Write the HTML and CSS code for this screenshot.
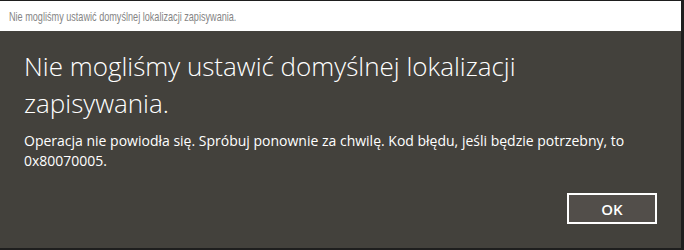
FILE: index.html
```html
<!DOCTYPE html>
<html lang="pl">

<head>
    <meta charset="UTF-8">
    <meta name="viewport" content="width=device-width, initial-scale=1.0">
    <title>Nie mogliśmy ustawić domyślnej lokalizacji zapisywania.</title>
    <link rel="stylesheet" href="styles.css">
</head>

<body>
    <div class="window">
        <div class="titlebar"><span>Nie mogliśmy ustawić domyślnej lokalizacji zapisywania.</span></div>

        <div class="dialog">
            <h1>Nie mogliśmy ustawić domyślnej lokalizacji zapisywania.</h1>
            <p>Operacja nie powiodła się. Spróbuj ponownie za chwilę. Kod błędu, jeśli będzie potrzebny, to 0x80070005.</p>

            <div class="actions">
                <button type="button">OK</button>
            </div>
        </div>
    </div>
</body>

</html>
```

FILE: styles.css
```css
body {
    font-family: "Open Sans", "Noto Sans", sans-serif;
    margin: 0;
    padding: 0;
    background-color: #1e1e1e;
    width: 684px;
    height: 250px;
    overflow: hidden;
}

.window {
    margin: 1px 3px 0 0;
    height: 247px;
    display: flex;
    flex-direction: column;
    background-color: #43413c;
}

.titlebar {
    height: 30px;
    line-height: 31px;
    background: white;
    color: #858585;
    font-family: "Liberation Sans", sans-serif;
    font-size: 13.5px;
    padding-left: 9px;
    white-space: nowrap;
}

/* the caption font is a narrow one */
.titlebar span {
    display: inline-block;
    transform: scaleX(0.675);
    transform-origin: left center;
}

.dialog {
    flex: 1;
    display: flex;
    flex-direction: column;
    padding: 17px 24px 24px 24px;
    color: white;
}

.dialog h1,
.dialog p {
    max-width: 612px;
}

.dialog h1 {
    margin: 0;
    font-size: 26px;
    font-weight: 300;
    line-height: 37px;
}

.dialog p {
    margin: 9px 0 0 0;
    font-size: 14px;
    line-height: 20px;
}

.actions {
    margin-top: auto;
    display: flex;
    justify-content: flex-end;
}

button {
    width: 90px;
    height: 31px;
    background-color: #524e4a;
    color: white;
    border: 2px solid white;
    font-family: inherit;
    font-size: 15px;
    font-weight: 600;
    padding: 0;
    cursor: pointer;
}
```
